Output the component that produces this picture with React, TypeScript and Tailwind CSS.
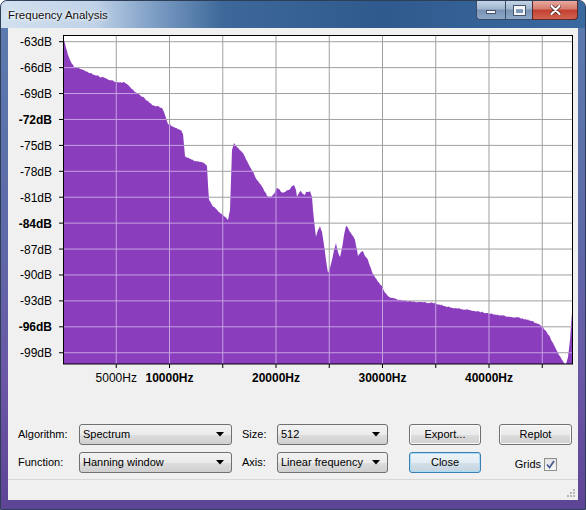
import React from 'react';

// spectrum outline, screen coordinates (plot box is 63..573 x 35..364)
const outline: [number, number][] = [
  [63, 36], [64, 40], [66, 48], [68, 55], [70, 60], [72, 64], [74, 67], [80, 69], [85, 71], [90, 73],
  [95, 75], [100, 77], [105, 78], [110, 80], [115, 82], [120, 82], [125, 83], [128, 85], [131, 88],
  [134, 91], [138, 94], [143, 97], [148, 101], [152, 105], [157, 106], [162, 108], [164, 112],
  [166, 118], [168, 124], [172, 126], [176, 128], [181, 130], [183, 134], [184, 145], [185, 156],
  [190, 159], [195, 161], [200, 162], [204, 163], [207, 166], [208, 185], [209, 200], [212, 205],
  [216, 209], [220, 213], [224, 216], [228, 220], [230, 210], [231, 180], [232, 150], [234, 143],
  [236, 146], [238, 148], [241, 151], [244, 155], [247, 161], [250, 167], [254, 174], [257, 180],
  [260, 184], [263, 188], [265, 192], [267, 196], [271, 197], [274, 194], [277, 188], [279, 189],
  [281, 192], [283, 193], [286, 191], [289, 190], [292, 186], [294, 185], [296, 190], [297, 197],
  [299, 193], [301, 191], [303, 194], [305, 195], [306, 192], [308, 192], [310, 191], [312, 197],
  [313, 210], [314, 220], [316, 237], [318, 230], [320, 226], [322, 232], [324, 245], [326, 260],
  [328, 273], [330, 268], [332, 260], [334, 250], [336, 243], [338, 252], [340, 257], [342, 248],
  [344, 235], [346, 226], [348, 228], [350, 232], [353, 236], [355, 240], [357, 250], [358, 256],
  [361, 252], [363, 251], [365, 256], [368, 260], [370, 266], [373, 274], [377, 280], [381, 285],
  [384, 291], [387, 295], [391, 298], [396, 299], [405, 301], [420, 302], [433, 303], [445, 306],
  [453, 308], [470, 310], [487, 313], [505, 316], [520, 318], [532, 321], [540, 325], [545, 330],
  [550, 337], [554, 345], [558, 353], [561, 358], [564, 363], [566, 364], [568, 357], [570, 340],
  [572, 312], [573, 312],
];

const noise = (x: number) => {
  const s = Math.sin(x * 12.9898) * 43758.5453;
  return s - Math.floor(s) - 0.5;
};

const spectrumPath = () => {
  let d = 'M63,364 L63,36';
  for (let i = 1; i < outline.length; i++) {
    const [x0, y0] = outline[i - 1];
    const [x1, y1] = outline[i];
    const steps = x1 - x0;
    for (let s = 1; s <= steps; s++) {
      const x = x0 + s;
      let y = y0 + ((y1 - y0) * s) / steps;
      if (s < steps && x < 560) y += noise(x) * 1.4;
      d += ` L${x},${Math.min(364, y).toFixed(1)}`;
    }
  }
  return d + ' L573,364 Z';
};

const dbTicks = Array.from({ length: 13 }, (_, k) => ({
  y: 41.7 + k * 25.92,
  label: `${-63 - k * 3}dB`,
  bold: k % 4 === 3,
}));

const hzLines = Array.from({ length: 9 }, (_, n) => 63 + (n + 1) * 53.25);

const hzLabels = [
  { x: 116.25, label: '5000Hz', bold: false },
  { x: 169.5, label: '10000Hz', bold: true },
  { x: 276, label: '20000Hz', bold: true },
  { x: 382.5, label: '30000Hz', bold: true },
  { x: 489, label: '40000Hz', bold: true },
];

const Chart: React.FC = () => {
  const d = spectrumPath();
  return (
    <svg width="570" height="396" viewBox="8 28 570 396" className="block font-['Liberation_Sans',Arial,sans-serif]">
      <defs>
        <clipPath id="spec">
          <path d={d} />
        </clipPath>
      </defs>
      <rect x="63" y="35" width="510" height="329" fill="#ffffff" />
      <g stroke="#a0a0a0" strokeWidth="1">
        {dbTicks.map((t) => (
          <line key={t.label} x1="63" x2="573" y1={t.y} y2={t.y} />
        ))}
        {hzLines.map((x) => (
          <line key={x} x1={x} x2={x} y1="35" y2="364" />
        ))}
      </g>
      <path d={d} fill="#8a3dbd" />
      <g stroke="#c6a2e2" strokeWidth="1" clipPath="url(#spec)">
        {dbTicks.map((t) => (
          <line key={t.label} x1="63" x2="573" y1={t.y} y2={t.y} />
        ))}
        {hzLines.map((x) => (
          <line key={x} x1={x} x2={x} y1="35" y2="364" />
        ))}
      </g>
      <rect x="63.5" y="35.5" width="509" height="328.5" fill="none" stroke="#000" strokeWidth="1" />
      <g stroke="#000" strokeWidth="1">
        {dbTicks.map((t) => (
          <line key={t.label} x1="59" x2="63" y1={t.y} y2={t.y} />
        ))}
        {hzLines.map((x) => (
          <line key={x} x1={x} x2={x} y1="364" y2="368" />
        ))}
      </g>
      {dbTicks.map((t) => (
        <text key={t.label} x="52" y={t.y + 4.5} textAnchor="end" fontSize="12" fontWeight={t.bold ? 700 : 400} fill="#000">
          {t.label}
        </text>
      ))}
      {hzLabels.map((h) => (
        <text key={h.label} x={h.x} y="381.5" textAnchor="middle" fontSize="12" fontWeight={h.bold ? 700 : 400} fill="#000">
          {h.label}
        </text>
      ))}
    </svg>
  );
};

const Caret: React.FC = () => (
  <svg width="8" height="5" viewBox="0 0 8 5">
    <polygon points="0,0 8,0 4,4.5" fill="#000" />
  </svg>
);

const Combo: React.FC<{ value: string; width: string }> = ({ value, width }) => (
  <div className={`${width} h-[21px] flex items-center justify-between rounded-[3px] border border-[#707070] bg-[linear-gradient(to_bottom,#f2f2f2_0%,#ebebeb_50%,#dddddd_51%,#cfcfcf_100%)] pl-[3px] pr-[7px]`}>
    <span>{value}</span>
    <Caret />
  </div>
);

const Button: React.FC<{ label: string; width: string; focused?: boolean }> = ({ label, width, focused }) => (
  <div
    className={
      focused
        ? `${width} h-[21px] flex items-center justify-center rounded-[3px] border border-[#3c7fb1] shadow-[inset_0_0_0_1px_#a9dcf7] bg-[linear-gradient(to_bottom,#eef5f9_0%,#e2ecf2_50%,#d2e0e9_51%,#c4d4de_100%)]`
        : `${width} h-[21px] flex items-center justify-center rounded-[3px] border border-[#707070] shadow-[inset_0_0_0_1px_#fbfbfb] bg-[linear-gradient(to_bottom,#f2f2f2_0%,#ebebeb_50%,#dddddd_51%,#cfcfcf_100%)]`
    }
  >
    {label}
  </div>
);

const TitleButtons: React.FC = () => (
  <div className="flex h-[19px] mr-[7px]">
    <div className="w-[29px] h-full flex items-center justify-center rounded-bl-[4px] border border-r-0 border-t-0 border-[#3a4d68] bg-[linear-gradient(to_bottom,#c4d4e6_0%,#9fb4cd_45%,#7893b3_50%,#8ea9c7_100%)]">
      <div className="w-[10px] h-[4px] mt-[4px] bg-[#f4f6f8] border border-[#44556e]" />
    </div>
    <div className="w-[27px] h-full flex items-center justify-center border border-r-0 border-t-0 border-[#3a4d68] bg-[linear-gradient(to_bottom,#c4d4e6_0%,#9fb4cd_45%,#7893b3_50%,#8ea9c7_100%)]">
      <div className="w-[11px] h-[9px] border-[2px] border-t-[3px] border-[#f4f6f8] outline outline-1 outline-[#44556e]" />
    </div>
    <div className="w-[46px] h-full flex items-center justify-center rounded-br-[4px] border border-t-0 border-[#5a2a2a] bg-[linear-gradient(to_bottom,#e8a89e_0%,#d47a6c_45%,#c33f30_50%,#d2624f_100%)]">
      <svg width="11" height="10" viewBox="0 0 11 10">
        <path d="M1.5 1 L9.5 9 M9.5 1 L1.5 9" stroke="#4a2020" strokeWidth="3.6" strokeLinecap="round" />
        <path d="M1.5 1 L9.5 9 M9.5 1 L1.5 9" stroke="#ffffff" strokeWidth="2.2" strokeLinecap="round" />
      </svg>
    </div>
  </div>
);

const App: React.FC = () => {
  return (
    <div className="w-[586px] h-[510px] flex flex-col rounded-t-[7px] border border-[#2e3e57] overflow-hidden bg-[linear-gradient(to_bottom,#5b7cae_0%,#5d6aa8_45%,#6b56a6_75%,#5e4494_100%)] text-[11px] text-black font-['Liberation_Sans',Arial,sans-serif]">
      <div className="h-[27px] shrink-0 flex items-start justify-between bg-[linear-gradient(to_right,#d2e0ef_0%,#bfd2e7_16%,#7e9fc6_26%,#3d6899_38%,#2f5a8d_65%,#3a69a0_100%)]">
        <div className="pl-[7px] pt-[6px] text-[11.5px] text-[#111] [text-shadow:0_0_6px_#ffffff,0_0_3px_#ffffff]">Frequency Analysis</div>
        <TitleButtons />
      </div>
      <div className="flex-1 flex px-[7px] pb-[9px]">
        <div className="flex-1 flex flex-col bg-[#f0f0f0]">
          <Chart />
          <div className="flex items-center pl-[10px] h-[21px]">
            <span className="w-[61px]">Algorithm:</span>
            <Combo value="Spectrum" width="w-[153px]" />
            <span className="w-[35px] ml-[10px]">Size:</span>
            <Combo value="512" width="w-[111px]" />
            <div className="ml-[21px]">
              <Button label="Export..." width="w-[72px]" />
            </div>
            <div className="ml-[18px]">
              <Button label="Replot" width="w-[73px]" />
            </div>
          </div>
          <div className="flex items-center pl-[10px] h-[21px] mt-[7px]">
            <span className="w-[61px]">Function:</span>
            <Combo value="Hanning window" width="w-[153px]" />
            <span className="w-[35px] ml-[10px]">Axis:</span>
            <Combo value="Linear frequency" width="w-[111px]" />
            <div className="ml-[21px]">
              <Button label="Close" width="w-[72px]" focused />
            </div>
            <div className="ml-[18px] w-[73px] flex items-center justify-end pr-[15px] gap-[3px]">
              <span className="mt-[3px]">Grids</span>
              <div className="w-[13px] h-[13px] mt-[3px] flex items-center justify-center border border-[#8e8f8f] bg-[linear-gradient(to_bottom,#e4e4e4,#f8f8f8)]">
                <svg width="9" height="9" viewBox="0 0 9 9">
                  <path d="M1 4.5 L3.5 7.5 L8 1" stroke="#4a5f97" strokeWidth="1.8" fill="none" />
                </svg>
              </div>
            </div>
          </div>
          <div className="mt-[6px] flex-1 flex items-end justify-end border-t border-[#d7d7d7] pr-[2px] pb-[2px]">
            <svg width="11" height="11" viewBox="0 0 11 11">
              <g fill="#b8b8b8">
                <rect x="8" y="2" width="2" height="2" />
                <rect x="5" y="5" width="2" height="2" />
                <rect x="8" y="5" width="2" height="2" />
                <rect x="2" y="8" width="2" height="2" />
                <rect x="5" y="8" width="2" height="2" />
                <rect x="8" y="8" width="2" height="2" />
              </g>
            </svg>
          </div>
        </div>
      </div>
    </div>
  );
};

export default App;
